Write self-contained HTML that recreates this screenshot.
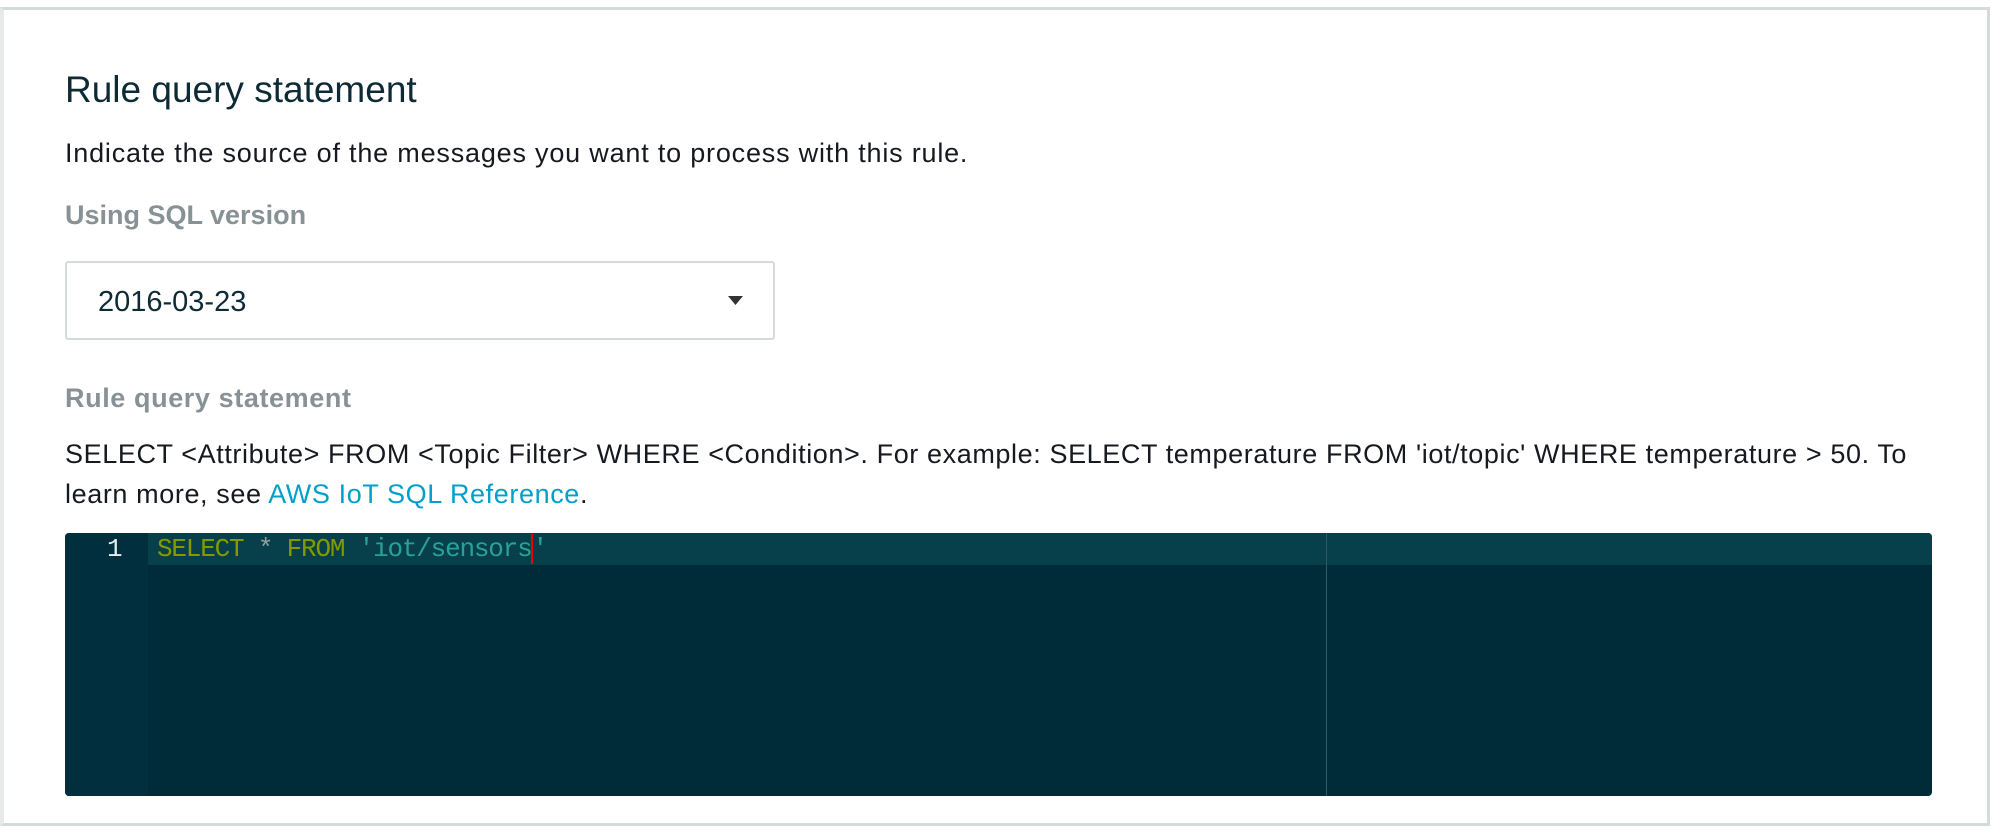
<!DOCTYPE html>
<html><head><meta charset="utf-8"><style>
html,body{margin:0;padding:0;width:1999px;height:835px;overflow:hidden;background:#fff;font-family:"Liberation Sans",Arial,sans-serif;}
.card{position:absolute;left:0;top:7px;width:1990px;height:819px;border-top:3px solid #d5dbdb;border-left:4px solid #e8eaea;border-right:3px solid #d5dbdb;border-bottom:3px solid #d5dbdb;box-sizing:border-box;}
.t{position:absolute;white-space:nowrap;}
</style></head><body>
<div class="card"></div>
<div class="t" style="left:65px;top:69px;font-size:37px;color:#0e2a35;">Rule query statement</div>
<div class="t" style="left:65px;top:138px;font-size:27px;letter-spacing:0.8px;color:#16191f;">Indicate the source of the messages you want to process with this rule.</div>
<div class="t" style="left:65px;top:200px;font-size:27px;font-weight:bold;color:#879196;">Using SQL version</div>
<div style="position:absolute;left:65px;top:261px;width:710px;height:79px;border:2px solid #d5dbdb;border-radius:3px;box-sizing:border-box;"></div>
<div class="t" style="left:98px;top:286px;font-size:29px;color:#0e2a35;">2016-03-23</div>
<svg style="position:absolute;left:728px;top:296px" width="15" height="10"><path d="M0 0H15L7.5 9Z" fill="#333"/></svg>
<div class="t" style="left:65px;top:383px;font-size:27px;letter-spacing:0.6px;font-weight:bold;color:#879196;">Rule query statement</div>
<div class="t" style="left:65px;top:434px;font-size:27px;letter-spacing:0.6px;color:#16191f;line-height:40px;">SELECT &lt;Attribute&gt; FROM &lt;Topic Filter&gt; WHERE &lt;Condition&gt;. For example: SELECT temperature FROM 'iot/topic' WHERE temperature &gt; 50. To<br>learn more, see <span style="color:#00a1c9">AWS IoT SQL Reference</span>.</div>
<div style="position:absolute;left:65px;top:533px;width:1867px;height:263px;background:#002b38;border-radius:4px;overflow:hidden;">
  <div style="position:absolute;left:0;top:0;width:83px;height:263px;background:#012f3d;"></div>
  <div style="position:absolute;left:83px;top:0;right:0;height:32px;background:#07404b;"></div>
  <div style="position:absolute;left:1261px;top:0;width:1px;height:263px;background:#2f5a63;"></div>
  <div class="t" style="left:42px;top:1px;font-family:'Liberation Mono',monospace;font-size:26px;line-height:30px;color:#e0eeee;">1</div>
  <div class="t" style="left:92px;top:1px;font-family:'Liberation Mono',monospace;font-size:26px;letter-spacing:-1.2px;line-height:30px;color:#93a1a1;"><span style="color:#859900">SELECT</span> * <span style="color:#859900">FROM</span> <span style="color:#2aa198">'iot/sensors</span><span style="border-left:2px solid #e00;margin-left:-1px;color:#2aa198">'</span></div>
</div>
</body></html>
